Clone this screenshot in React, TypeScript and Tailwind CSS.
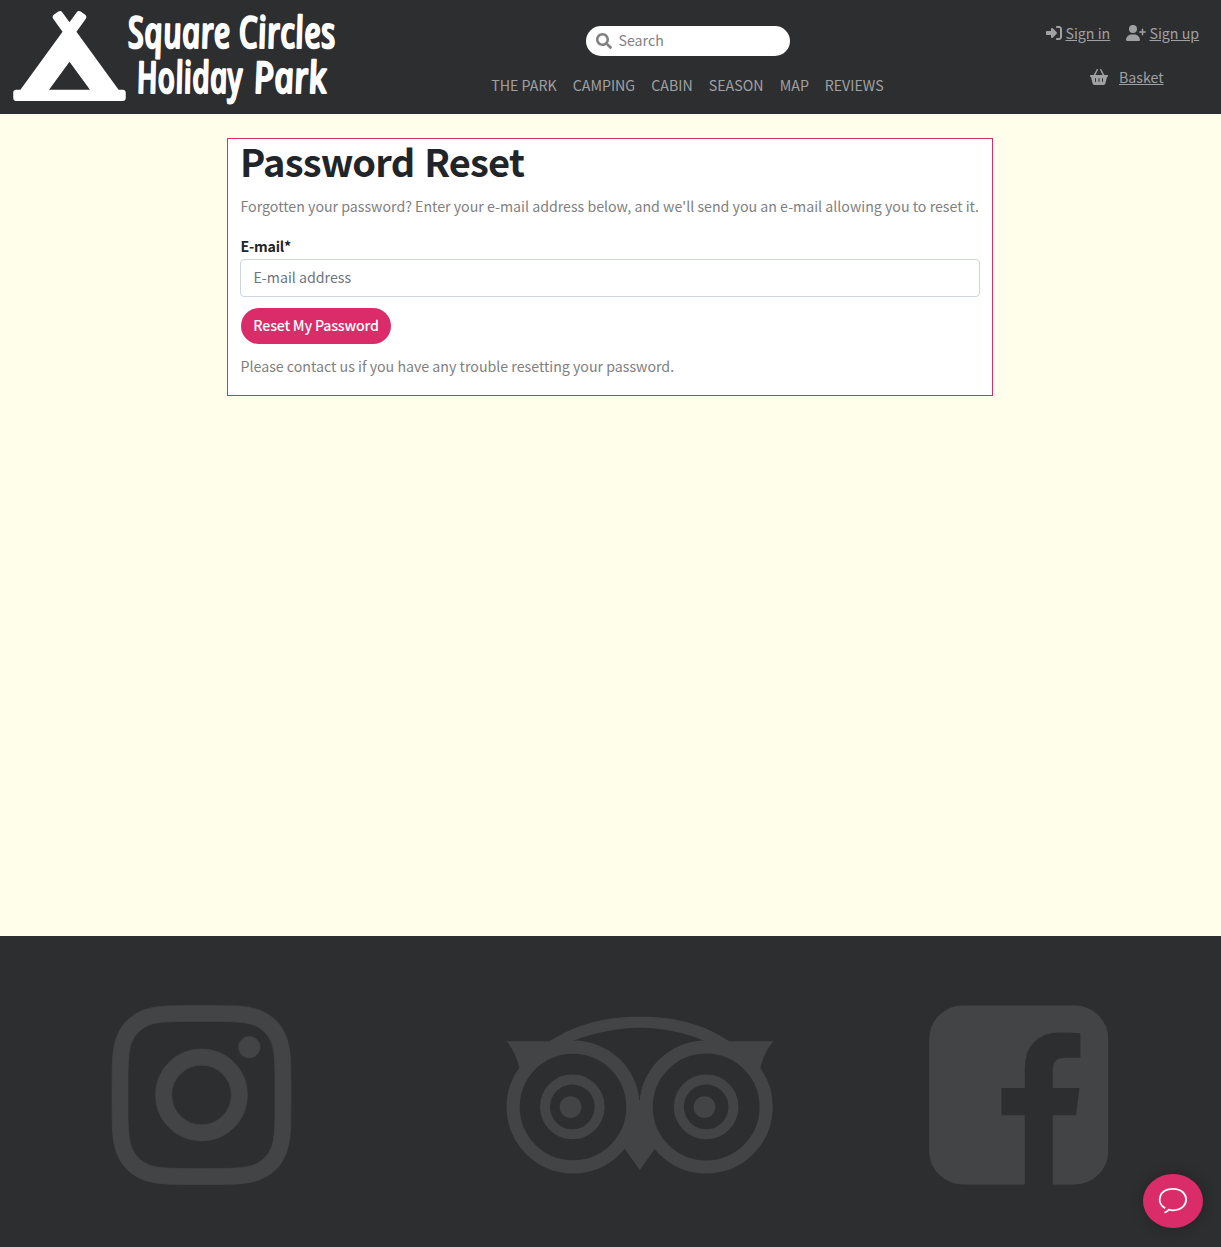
import type { ReactNode } from 'react';
import { FaCampground, FaSearch } from 'react-icons/fa';
import { FaRightToBracket, FaUserPlus, FaBasketShopping } from 'react-icons/fa6';

const links = [
  { label: 'THE PARK', width: 'w-[65.5px]' },
  { label: 'CAMPING', width: 'w-[62.5px]' },
  { label: 'CABIN', width: 'w-[41.5px]' },
  { label: 'SEASON', width: 'w-[55px]' },
  { label: 'MAP', width: 'w-[29px]' },
  { label: 'REVIEWS', width: 'w-[59px]' },
];

/* Upright lettering with single-storey forms: an italic face slanted back. */
const logoWords = [
  { text: 'Square', x: 129, y: 48, width: 103 },
  { text: 'Circles', x: 240, y: 48, width: 97 },
  { text: 'Holiday', x: 138, y: 92.5, width: 106 },
  { text: 'Park', x: 255, y: 92.5, width: 73 },
];

function Logo() {
  return (
    <a href="#" className="flex w-[340px] shrink-0 pt-[11px] pl-[13px] text-white" aria-label="Square Circles Holiday Park">
      <FaCampground className="h-[90px] w-[113px] shrink-0" />
      <svg
        className="-mt-[11px] h-[114px] w-[214px] shrink-0 overflow-visible"
        viewBox="126 0 214 114"
        fill="white"
        stroke="white"
        strokeWidth="1.8"
        strokeLinejoin="round"
        fontFamily="'Open Sans', sans-serif"
        fontStyle="italic"
        fontWeight="600"
        fontSize="44"
      >
        {logoWords.map((w) => (
          <text
            key={w.text}
            transform={`translate(${w.x} ${w.y}) skewX(7)`}
            textLength={w.width}
            lengthAdjust="spacingAndGlyphs"
          >
            {w.text}
          </text>
        ))}
      </svg>
    </a>
  );
}

function Header() {
  return (
    <header className="flex h-[114px] justify-between bg-[#2d2e30] text-[#a0a1a2]">
      <Logo />
      <div className="flex flex-col items-center pt-[26px] pl-[6px]">
        <div className="flex h-[30px] w-[204px] items-center gap-[6px] rounded-full bg-white pl-[10px] text-[#808080]">
          <FaSearch className="size-4" />
          <span className="-mt-[2px] pl-[0.5px]">Search</span>
        </div>
        <nav className="mt-[17px] flex gap-4 pr-[1px]">
          {links.map((l) => (
            <a key={l.label} href="#" className={`${l.width} whitespace-nowrap`}>
              {l.label}
            </a>
          ))}
        </nav>
      </div>
      <div className="w-[191px] pt-[21px]">
        <div className="flex h-6 pl-4">
          <a href="#" className="flex w-[80px] items-center gap-[3px]">
            <FaRightToBracket className="size-4" />
            <span className="pl-[0.5px] whitespace-nowrap underline">Sign in</span>
          </a>
          <a href="#" className="flex items-center gap-[3px]">
            <FaUserPlus className="h-4 w-5" />
            <span className="pl-[0.5px] whitespace-nowrap underline">Sign up</span>
          </a>
        </div>
        <a href="#" className="mt-5 flex h-6 items-center gap-[11px] pl-[60px]">
          <FaBasketShopping className="h-4 w-[18px]" />
          <span className="underline">Basket</span>
        </a>
      </div>
    </header>
  );
}

function ResetCard() {
  return (
    <section className="mt-6 ml-[227px] flex h-[258px] w-[766px] flex-col items-start border border-[#da2c68] bg-white px-[12px] text-[#808080]">
      <h1 className="h-[47px] text-[38px] leading-[43px] font-bold tracking-[-0.8px] [word-spacing:2px] text-[#212529]">Password Reset</h1>
      <p className="mt-2 ml-[0.5px] whitespace-nowrap">
        Forgotten your password? Enter your e-mail address below, and we'll send you an e-mail allowing you to reset it.
      </p>
      <label htmlFor="email" className="mt-4 ml-[0.5px] font-bold tracking-[-0.2px] text-[#212529]">E-mail*</label>
      <input
        id="email"
        placeholder="E-mail address"
        className="mt-px h-[38px] w-[740px] rounded border border-[#ced4da] px-[12.5px] pb-[2px] outline-none placeholder:text-[#6c757d]"
      />
      <button className="mt-[11px] ml-px h-9 w-[150px] rounded-full bg-[#da2c68] pb-[2px] font-medium tracking-[-0.2px] whitespace-nowrap text-white">
        Reset My Password
      </button>
      <p className="mt-[10px] ml-[0.5px]">Please contact us if you have any trouble resetting your password.</p>
    </section>
  );
}

function SocialLink({ label, className, children }: { label: string; className: string; children: ReactNode }) {
  return (
    <a href="#" aria-label={label} className={className}>
      {children}
    </a>
  );
}

function Footer() {
  return (
    <footer className="flex h-[311px] items-start bg-[#2d2e30] pt-[69px] text-[#434446]">
      <SocialLink label="Instagram" className="ml-[112px]">
        <svg viewBox="0 124 1536 1536" className="size-[179px] overflow-visible" fill="currentColor" stroke="currentColor" strokeWidth="6">
          <path d="M1024 896q0-106-75-181t-181-75-181 75-75 181 75 181 181 75 181-75 75-181zm138 0q0 164-115 279t-279 115-279-115-115-279 115-279 279-115 279 115 115 279zm108-410q0 38-27 65t-65 27-65-27-27-65 27-65 65-27 65 27 27 65zm-502-220q-7 0-76.5-.5t-105.5 0-96.5 3-103 10-71.5 18.5q-50 20-88 58t-58 88q-11 29-18.5 71.5t-10 103-3 96.5 0 105.5.5 76.5-.5 76.5 0 105.5 3 96.5 10 103 18.5 71.5q20 50 58 88t88 58q29 11 71.5 18.5t103 10 96.5 3 105.5 0 76.5-.5 76.5.5 105.5 0 96.5-3 103-10 71.5-18.5q50-20 88-58t58-88q11-29 18.5-71.5t10-103 3-96.5 0-105.5-.5-76.5.5-76.5 0-105.5-3-96.5-10-103-18.5-71.5q-20-50-58-88t-88-58q-29-11-71.5-18.5t-103-10-96.5-3-105.5 0-76.5.5zm768 630q0 229-5 317-10 208-124 322t-322 124q-88 5-317 5t-317-5q-208-10-322-124t-124-322q-5-88-5-317t5-317q10-208 124-322t322-124q88-5 317-5t317 5q208 10 322 124t124 322q5 88 5 317z" />
        </svg>
      </SocialLink>
      <SocialLink label="Tripadvisor" className="mt-[11px] ml-[215px]">
        <svg viewBox="48 48 804 474" className="h-[158px] w-[268px]" fill="currentColor">
          <path d="M50 124H178C260 70 350 50 450 50S640 70 718 124H850Q820 160 811 205L700 321H200L89 205Q78 160 50 124Z" />
          <path d="M250 122C320 95 390 83 450 83S580 95 642 122C520 130 449 220 449 321C449 220 380 130 250 122Z" fill="#2d2e30" />
          <path d="M440 300L405 447L449.500 509L494 447L458 300Z" />
          <circle cx="249" cy="321" r="179.500" fill="#2d2e30" stroke="currentColor" strokeWidth="39.500" />
          <circle cx="648.500" cy="321" r="180" fill="#2d2e30" stroke="currentColor" strokeWidth="39.500" />
          <path d="M449 312L405 447L449.500 509L494 447Z" />
          <circle cx="247" cy="320.500" r="82" fill="none" stroke="currentColor" strokeWidth="30" />
          <circle cx="648.500" cy="320.500" r="82" fill="none" stroke="currentColor" strokeWidth="30" />
          <circle cx="241.500" cy="321" r="32.500" />
          <circle cx="643.500" cy="321" r="32.500" />
        </svg>
      </SocialLink>
      <SocialLink label="Facebook" className="ml-[155px]">
        <svg viewBox="-2 -4 1536 1536" className="size-[179px] overflow-visible" fill="currentColor">
          <path d="M1248 0q119 0 203.500 84.500t84.500 203.500v960q0 119-84.500 203.500t-203.500 84.500h-188v-595h199l30-232h-229v-148q0-56 23.500-84t91.500-28l122-1v-207q-63-9-178-9-136 0-217.500 80t-81.500 226v171h-200v232h200v595h-532q-119 0-203.500-84.500t-84.500-203.500v-960q0-119 84.500-203.500t203.500-84.500h960z" />
        </svg>
      </SocialLink>
    </footer>
  );
}

export default function App() {
  return (
    <div className="flex h-[1247px] w-[1221px] flex-col overflow-hidden bg-[#fffeeb] font-['Noto_Sans_CJK_SC',sans-serif] text-[14.2px] leading-6">
      <Header />
      <main className="flex-1">
        <ResetCard />
      </main>
      <Footer />
      <button
        aria-label="Open chat"
        className="fixed top-[1174px] left-[1143px] flex h-[54px] w-[60px] items-center justify-center rounded-[50%] bg-[#da2c68] shadow-[0_0_14px_rgba(0,0,0,0.25)]"
      >
        <svg viewBox="0 0 30 28" className="h-7 w-[30px]" fill="none" stroke="white" strokeWidth="1.800">
          <path d="M7.200 21.300C-2.500 15.500 1 1.900 15 1.900C32.500 1.900 32.500 23.300 15 23.300C13.300 23.300 12 23.100 10.700 22.700Q9.300 24.800 6.500 25.600" />
        </svg>
      </button>
    </div>
  );
}
